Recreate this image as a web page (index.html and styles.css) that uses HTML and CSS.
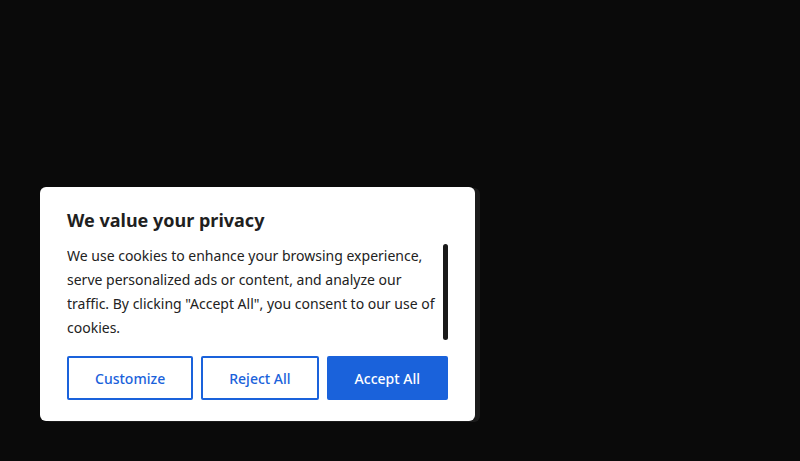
FILE: index.html
```html
<!DOCTYPE html>
<html lang="en">
<head>
<meta charset="utf-8">
<title>Cookie consent</title>
<link rel="stylesheet" href="styles.css">
</head>
<body>
<div class="page">
  <div class="consent" role="dialog" aria-label="We value your privacy">
    <h2 class="consent-title">We value your privacy</h2>
    <div class="consent-body">
      <p class="consent-text">We use cookies to enhance your browsing experience, serve personalized ads or content, and analyze our traffic. By clicking "Accept All", you consent to our use of cookies.</p>
      <div class="scroll-thumb" aria-hidden="true"></div>
    </div>
    <div class="consent-actions">
      <button class="btn btn-outline">Customize</button>
      <button class="btn btn-outline">Reject All</button>
      <button class="btn btn-primary">Accept All</button>
    </div>
  </div>
</div>
</body>
</html>
```
FILE: styles.css
```css
html, body {
  margin: 0;
  padding: 0;
  background: #0a0a0a;
  font-family: "Noto Sans", "Open Sans", sans-serif;
}
.page {
  width: 800px;
  height: 461px;
  padding: 187px 0 0 40px;
  box-sizing: border-box;
}
.consent {
  width: 435px;
  box-sizing: border-box;
  background: #ffffff;
  border-radius: 6px;
  padding: 20px 27px 21px 27px;
  box-shadow: 5px 1px 0 #1b1b1b;
}
.consent-title {
  margin: 0 0 10px 0;
  font-size: 18px;
  line-height: 27px;
  font-weight: 700;
  color: #1f1f1f;
}
.consent-body {
  display: flex;
  gap: 4px;
  height: 96px;
  overflow: hidden;
}
.consent-text {
  flex: 1 1 auto;
  margin: 0;
  font-size: 14px;
  line-height: 24px;
  color: #222222;
}
.scroll-thumb {
  flex: 0 0 5px;
  height: 96px;
  background: #1a1a1a;
  border-radius: 3px;
}
.consent-actions {
  display: flex;
  gap: 8px;
  margin-top: 16px;
}
.btn {
  flex: 1 1 auto;
  height: 44px;
  border-radius: 2px;
  font-family: "Noto Sans", "Open Sans", sans-serif;
  font-size: 14px;
  font-weight: 500;
  padding: 0 8px;
  cursor: pointer;
}
.btn-outline {
  background: #ffffff;
  color: #1a62db;
  border: 2px solid #1a62db;
}
.btn-primary {
  background: #1a62db;
  color: #ffffff;
  border: 2px solid #1a62db;
}
```
